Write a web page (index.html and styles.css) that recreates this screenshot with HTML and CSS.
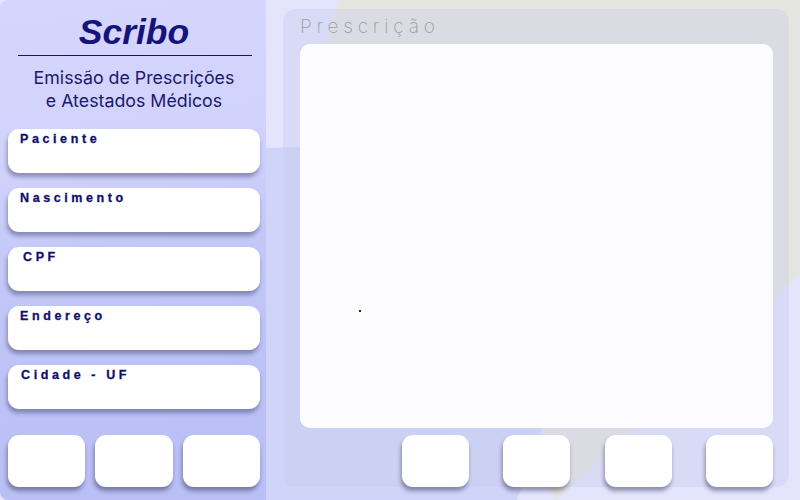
FILE: index.html
```html
<!DOCTYPE html>
<html lang="pt-BR">
<head>
<meta charset="utf-8">
<title>Scribo</title>
<link rel="stylesheet" href="styles.css">
</head>
<body>
<div class="app">
  <aside class="sidebar">
    <h1 class="brand">Scribo</h1>
    <hr class="rule">
    <p class="subtitle">Emissão de Prescrições<br>e Atestados Médicos</p>
    <div class="fields">
      <div class="field"><span class="label">Paciente</span></div>
      <div class="field"><span class="label">Nascimento</span></div>
      <div class="field"><span class="label label-cpf">CPF</span></div>
      <div class="field"><span class="label">Endereço</span></div>
      <div class="field"><span class="label label-city">Cidade - UF</span></div>
    </div>
    <div class="side-actions">
      <button class="btn side-btn"></button>
      <button class="btn side-btn"></button>
      <button class="btn side-btn"></button>
    </div>
  </aside>
  <main class="main">
    <section class="card">
      <h2 class="card-title">Prescrição</h2>
      <div class="editor"><span class="dot"></span></div>
      <div class="actions">
        <button class="btn act-btn"></button>
        <button class="btn act-btn"></button>
        <button class="btn act-btn"></button>
        <button class="btn act-btn"></button>
      </div>
    </section>
  </main>
</div>
</body>
</html>
```
FILE: styles.css
```css
* { box-sizing: border-box; }
html, body { margin: 0; padding: 0; }
body {
  width: 800px;
  height: 500px;
  overflow: hidden;
  background: #e4e4fc;
  font-family: "Liberation Sans", Arial, sans-serif;
}
.app {
  display: flex;
  width: 800px;
  height: 500px;
}
.sidebar {
  width: 266px;
  flex: none;
  display: flex;
  flex-direction: column;
  padding: 0 6px 0 8px;
  border-radius: 8px 0 0 8px;
  background: linear-gradient(172deg, #d5d5fd 0%, #d2d3fc 30%, #c3c8f8 50%, #bcc2f6 75%, #b9bff5 100%);
}
.brand {
  margin: 12px 0 0;
  height: 40px;
  line-height: 40px;
  font-size: 35.5px;
  font-weight: bold;
  font-style: italic;
  text-align: center;
  color: #14147a;
}
.rule {
  margin: 3px 8px 0 10px;
  border: 0;
  height: 1px;
  background: #14146e;
}
.subtitle {
  margin: 10px 0 0;
  font-family: Inter, "Liberation Sans", sans-serif;
  font-size: 17.8px;
  line-height: 23px;
  text-align: center;
  color: #1a1a6e;
}
.fields {
  margin-top: 17px;
  display: flex;
  flex-direction: column;
  gap: 15px;
}
.field {
  height: 44px;
  background: #ffffff;
  border-radius: 11px;
  box-shadow: -1px 4px 4px rgba(40, 40, 80, 0.4);
  padding: 4px 12px 0;
}
.label {
  display: block;
  font-size: 12.5px;
  line-height: 12px;
  font-weight: bold;
  letter-spacing: 3.6px;
  color: #10106b;
  -webkit-text-stroke: 0.3px #10106b;
}
.label-cpf { padding-left: 3px; }
.label-city { padding-left: 1px; }
.side-actions {
  margin-top: 26px;
  display: flex;
  gap: 10px;
}
.btn {
  border: 0;
  padding: 0;
  background: #ffffff;
  border-radius: 11px;
  box-shadow: -1px 4px 4px rgba(40, 40, 80, 0.45);
}
.side-btn {
  flex: 1;
  height: 52px;
}
.main {
  flex: 1;
  position: relative;
  padding: 9px 11px 13px 17px;
}
.main::before {
  content: "";
  position: absolute;
  inset: 0;
  background: #e6e6e0;
  clip-path: polygon(72px 0, 534px 0, 534px 275px, 290px 500px, 34px 150px);
}
.main::after {
  content: "";
  position: absolute;
  inset: 0;
  background: #d0d4f8;
  clip-path: polygon(0 148px, 377px 140px, 251px 500px, 0 500px);
}
.card {
  position: relative;
  z-index: 1;
  height: 478px;
  border-radius: 12px;
  background: rgba(196, 200, 232, 0.32);
  padding: 0 16px 0 17px;
  display: flex;
  flex-direction: column;
}
.card-title {
  margin: 0;
  height: 35px;
  font-family: Inter, "Liberation Sans", sans-serif;
  font-weight: 200;
  font-size: 19px;
  line-height: 20px;
  padding-top: 8px;
  letter-spacing: 4.8px;
  color: #9c9ca6;
}
.editor {
  position: relative;
  height: 384px;
  background: #fcfcff;
  border-radius: 10px;
}
.dot {
  position: absolute;
  left: 59px;
  top: 266px;
  width: 2px;
  height: 2px;
  background: #222;
}
.actions {
  margin-top: 7px;
  display: flex;
  justify-content: flex-end;
  gap: 34.33px;
}
.act-btn {
  width: 67px;
  height: 52px;
}
```
